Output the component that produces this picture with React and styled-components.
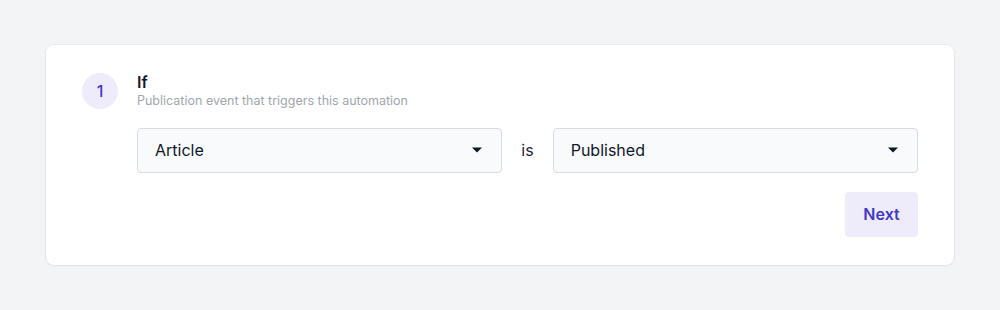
import React from 'react';
import styled, { createGlobalStyle } from 'styled-components';

const GlobalStyle = createGlobalStyle`
  html, body {
    margin: 0;
    padding: 0;
    background: #f3f4f6;
    font-family: Inter, "Noto Sans", sans-serif;
  }
`;

const Page = styled.div`
  padding: 45px 46px;
  box-sizing: border-box;
  width: 1000px;
  height: 310px;
`;

const Card = styled.div`
  background: #ffffff;
  border-radius: 8px;
  box-shadow: 0 0 0 1px rgba(17, 24, 39, 0.04), 0 1px 3px rgba(17, 24, 39, 0.05);
  padding: 28px 36px 28px 36px;
  display: flex;
  gap: 19px;
`;

const StepBadge = styled.div`
  flex: 0 0 36px;
  width: 36px;
  height: 36px;
  border-radius: 50%;
  background: #eeecfb;
  color: #4338ca;
  font-size: 16px;
  font-weight: 500;
  display: flex;
  align-items: center;
  justify-content: center;
`;

const Body = styled.div`
  flex: 1;
  display: flex;
  flex-direction: column;
  margin-top: -1px;
`;

const Title = styled.div`
  font-size: 16px;
  font-weight: 600;
  line-height: 20px;
  color: #111827;
`;

const Subtitle = styled.div`
  font-size: 12.5px;
  line-height: 18px;
  color: #a1a6ae;
`;

const ConditionRow = styled.div`
  display: flex;
  align-items: center;
  gap: 19px;
  margin-top: 18px;
`;

const Select = styled.div`
  flex: 1;
  height: 45px;
  box-sizing: border-box;
  border: 1px solid #d9dce1;
  border-radius: 4px;
  background: #f8fafc;
  display: flex;
  align-items: center;
  justify-content: space-between;
  padding: 0 19px 1px 17px;
  font-size: 16px;
  color: #111827;
`;

const Operator = styled.span`
  font-size: 16px;
  color: #1f2937;
  margin-bottom: 1px;
`;

const Footer = styled.div`
  display: flex;
  justify-content: flex-end;
  margin-top: 19px;
`;

const NextButton = styled.button`
  all: unset;
  box-sizing: border-box;
  width: 73px;
  height: 45px;
  border-radius: 4px;
  background: #eeecfb;
  color: #4338ca;
  font-family: Inter, sans-serif;
  font-size: 16px;
  font-weight: 600;
  display: flex;
  align-items: center;
  justify-content: center;
  padding-bottom: 1px;
`;

const Caret = () => (
  <svg width="10" height="6" viewBox="0 0 10 6">
    <path d="M0 0.5 L10 0.5 L5 5.5 Z" fill="#111827" />
  </svg>
);

const Dropdown = ({ value }) => (
  <Select>
    <span>{value}</span>
    <Caret />
  </Select>
);

export default function App() {
  return (
    <Page>
      <GlobalStyle />
      <Card>
        <StepBadge>1</StepBadge>
        <Body>
          <Title>If</Title>
          <Subtitle>Publication event that triggers this automation</Subtitle>
          <ConditionRow>
            <Dropdown value="Article" />
            <Operator>is</Operator>
            <Dropdown value="Published" />
          </ConditionRow>
          <Footer>
            <NextButton>Next</NextButton>
          </Footer>
        </Body>
      </Card>
    </Page>
  );
}
